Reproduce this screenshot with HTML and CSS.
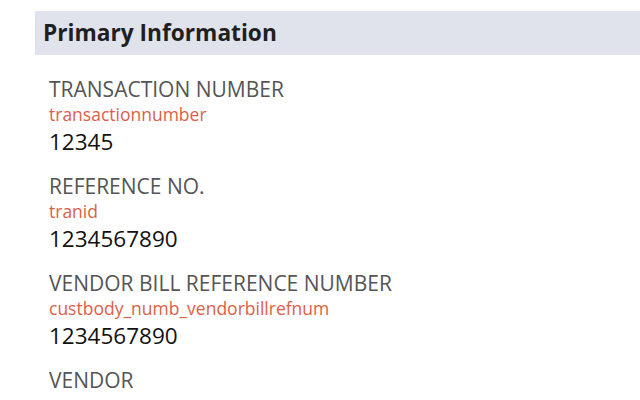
FILE: index.html
```html
<!DOCTYPE html>
<html>
<head>
<meta charset="utf-8">
<link rel="stylesheet" href="styles.css">
</head>
<body>
<div class="page">
  <div class="section-header">Primary Information</div>
  <div class="fields">
    <div class="field">
      <div class="label">TRANSACTION NUMBER</div>
      <div class="id">transactionnumber</div>
      <div class="value">12345</div>
    </div>
    <div class="field">
      <div class="label">REFERENCE NO.</div>
      <div class="id">tranid</div>
      <div class="value">1234567890</div>
    </div>
    <div class="field">
      <div class="label">VENDOR BILL REFERENCE NUMBER</div>
      <div class="id">custbody_numb_vendorbillrefnum</div>
      <div class="value">1234567890</div>
    </div>
    <div class="field">
      <div class="label">VENDOR</div>
    </div>
  </div>
</div>
</body>
</html>
```
FILE: styles.css
```css
html, body {
  margin: 0;
  padding: 0;
  background: #ffffff;
  font-family: "Open Sans", sans-serif;
}
.page {
  padding: 11px 0 0 35px;
}
.section-header {
  background: #e0e3eb;
  height: 44px;
  line-height: 44px;
  padding-left: 8px;
  font-size: 22.7px;
  font-weight: 700;
  color: #1f1f1f;
}
.fields {
  padding: 21px 0 0 14px;
}
.field {
  margin-bottom: 16px;
}
.label {
  font-size: 21px;
  line-height: 26px;
  color: #555555;
}
.id {
  font-size: 17.5px;
  line-height: 25px;
  color: #dc5f46;
}
.value {
  font-size: 22.5px;
  line-height: 30px;
  color: #111111;
}
```
